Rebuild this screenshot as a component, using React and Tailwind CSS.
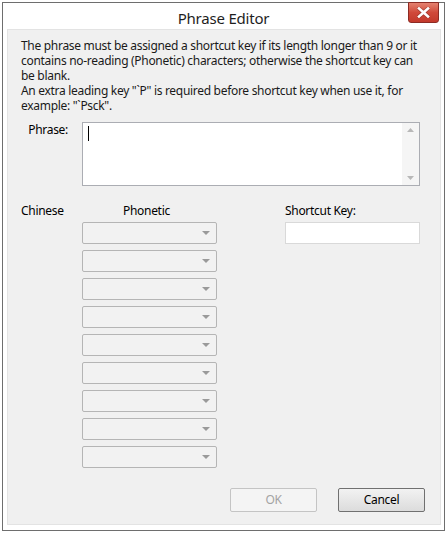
export default function App() {
    const combos = [0, 1, 2, 3, 4, 5, 6, 7, 8];

    return (
        <div className="w-[447px] h-[535px] bg-white pt-[2px] pl-[2px] font-['Noto_Sans',sans-serif] text-[12px] tracking-[-0.3px] text-black">
            {/* Window frame */}
            <div className="w-[443px] h-[529px] border border-[#6e6e6e] bg-white flex flex-col">
                {/* Title bar */}
                <div className="relative h-[26px] flex items-center justify-center shrink-0">
                    <span className="text-[15px] tracking-[-0.2px] text-[#1e1e1e] leading-none mt-[4px]">Phrase Editor</span>
                    <div className="absolute right-[5px] top-[-1px] w-[31px] h-[21px] border border-[#8c2b24] rounded-b-[3px] bg-gradient-to-b from-[#e4816f] via-[#d0493a] to-[#c3392b] flex items-center justify-center">
                        <svg width="13" height="11" viewBox="0 0 13 11">
                            <path d="M2 1.5 L11 9.5 M11 1.5 L2 9.5" stroke="#5a1a14" strokeWidth="4" strokeLinecap="square" opacity="0.35" />
                            <path d="M2 1.5 L11 9.5 M11 1.5 L2 9.5" stroke="#ffffff" strokeWidth="2.6" strokeLinecap="square" />
                        </svg>
                    </div>
                </div>

                {/* Client area */}
                <div className="ml-[4px] mr-[3px] mb-[5px] flex-1 border border-[#e3e3e3] bg-[#f0f0f0] flex flex-col">
                    {/* Description */}
                    <div className="pl-[13px] pt-[8px] leading-[15px] whitespace-nowrap text-[#1a1a1a]">
                        <div>The phrase must be assigned a shortcut key if its length longer than 9 or it</div>
                        <div>contains no-reading (Phonetic) characters; otherwise the shortcut key can</div>
                        <div>be blank.</div>
                        <div>An extra leading key "`P" is required before shortcut key when use it, for</div>
                        <div>example: "`Psck".</div>
                    </div>

                    {/* Phrase input */}
                    <div className="flex mt-[9px] pl-[13px]">
                        <div className="w-[47px] text-right leading-[15px]">Phrase:</div>
                        <div className="ml-[14px] w-[338px] h-[64px] border border-[#abadb3] bg-white flex">
                            <div className="flex-1 pl-[5px] pt-[3px]">
                                <div className="w-px h-[15px] bg-black" />
                            </div>
                            <div className="w-[17px] bg-[#f5f5f5] flex flex-col items-center justify-between py-[5px]">
                                <svg width="7" height="4" viewBox="0 0 7 4"><path d="M0 4 L3.5 0 L7 4 Z" fill="#b8b8b8" /></svg>
                                <svg width="7" height="4" viewBox="0 0 7 4"><path d="M0 0 L3.5 4 L7 0 Z" fill="#b8b8b8" /></svg>
                            </div>
                        </div>
                    </div>

                    {/* Phonetic / shortcut area */}
                    <div className="flex mt-[17px] pl-[13px]">
                        <div className="w-[196px] flex flex-col">
                            <div className="flex leading-[15px] h-[15px]">
                                <span className="w-[102px]">Chinese</span>
                                <span>Phonetic</span>
                            </div>
                            <div className="ml-[61px] mt-[4px] flex flex-col gap-[6px]">
                                {combos.map((i) => (
                                    <div
                                        key={i}
                                        className="w-[135px] h-[22px] rounded-[2px] border border-[#b5b5b5] bg-[#f2f2f2] flex items-center justify-end pr-[6px]"
                                    >
                                        <svg width="8" height="4" viewBox="0 0 8 4"><path d="M0 0 L4 4 L8 0 Z" fill="#9a9a9a" /></svg>
                                    </div>
                                ))}
                            </div>
                        </div>
                        <div className="ml-[68px] flex flex-col">
                            <span className="leading-[15px] h-[15px]">Shortcut Key:</span>
                            <div className="mt-[4px] w-[135px] h-[22px] border border-[#d9d9d9] bg-white" />
                        </div>
                    </div>

                    {/* Buttons */}
                    <div className="flex justify-end gap-[21px] mt-[20px] pr-[15px]">
                        <button className="w-[87px] h-[24px] rounded-[2px] border border-[#c4c4c4] bg-[#f4f4f4] text-[#a3a3a3]">OK</button>
                        <button className="w-[87px] h-[24px] rounded-[2px] border border-[#707070] bg-gradient-to-b from-[#f2f2f2] to-[#dcdcdc] text-black">Cancel</button>
                    </div>
                </div>
            </div>
        </div>
    );
}
